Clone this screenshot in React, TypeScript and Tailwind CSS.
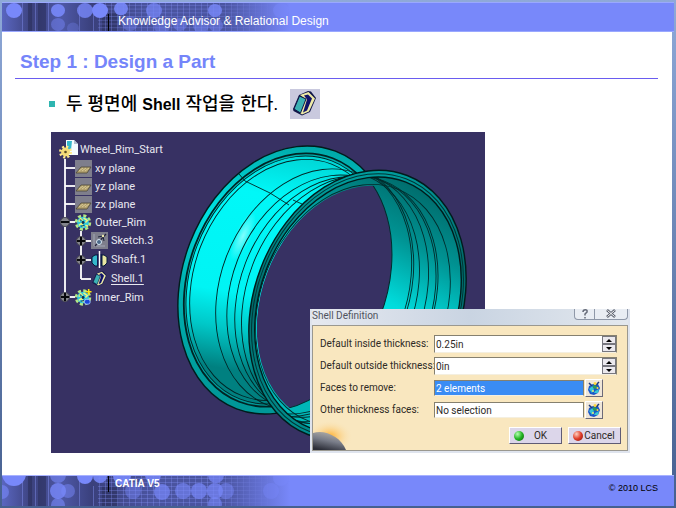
import type { ReactNode, SVGProps } from "react";

const headerDots = [
  [12, 8, 8, 1],
  [56, 8, 7, 0.9],
  [56, 23, 7, 0.45],
  [71, 27, 6, 0.3],
  [83, 8, 8, 0.8],
  [98, 8, 8, 1],
  [119, 6, 7, 0.9],
  [128, 22, 8, 0.4],
  [152, 8, 8, 0.7],
  [160, 25, 8, 0.4],
  [178, 23, 7, 0.45],
  [199, 24, 8, 0.5],
  [213, 8, 7, 0.8],
  [214, 24, 7, 0.45],
  [279, 8, 8, 0.5],
];

const footerDots = [
  [12, -2, 12, 1],
  [0, 16, 7, 0.6],
  [56, -1, 8, 0.6],
  [56, 15, 8, 0.8],
  [66, 15, 7, 0.5],
  [56, 29, 7, 0.6],
  [83, 0, 8, 1],
  [98, 0, 7, 0.9],
  [120, 0, 9, 0.9],
  [131, 15, 8, 0.45],
  [151, -1, 8, 0.8],
  [160, 16, 8, 0.7],
  [181, 15, 8, 0.6],
  [197, 15, 8, 0.7],
  [214, -1, 8, 0.7],
  [213, 15, 8, 0.7],
  [224, 15, 8, 0.5],
  [213, 28, 7, 0.6],
  [269, 15, 8, 0.4],
  [279, 2, 8, 0.5],
];

function BannerArt({ id, dots }: { id: string; dots: number[][] }) {
  return (
    <svg
      className="absolute left-0 top-0 h-full w-[300px]"
      viewBox="0 0 300 30"
      preserveAspectRatio="none"
      aria-hidden="true"
    >
      <defs>
        <linearGradient id={`${id}-fade`}>
          <stop offset="0" stopColor="#5a66c0" />
          <stop offset="0.1" stopColor="#3c427e" />
          <stop offset="0.2" stopColor="#4e58a6" />
          <stop offset="0.3" stopColor="#3a407c" />
          <stop offset="0.5" stopColor="#4a54a0" />
          <stop offset="0.74" stopColor="#4a54a0" />
          <stop offset="0.96" stopColor="#7888fa" />
        </linearGradient>
        <linearGradient id={`${id}-mask`}>
          <stop offset="0" stopColor="#fff" />
          <stop offset="0.7" stopColor="#fff" />
          <stop offset="0.92" stopColor="#000" />
        </linearGradient>
        <pattern id={`${id}-mesh`} width="6" height="4" patternUnits="userSpaceOnUse">
          <path d="M1.5 0V4M0 2.5H6" stroke="#8c9aff" strokeOpacity="0.3" />
        </pattern>
        <mask id={`${id}-m`}>
          <rect width="300" height="30" fill={`url(#${id}-mask)`} />
        </mask>
      </defs>
      <rect width="300" height="30" fill={`url(#${id}-fade)`} />
      <g mask={`url(#${id}-m)`}>
        <path d="M26 0h4v30h-4zM36 0h8v30h-8zM100 10h16v20h-16z" fill="#262a52" fillOpacity="0.5" />
        <path d="M20.5 0v30M33.5 0v30M46.500 0v30M77.5 4v26M91.5 10v20" stroke="#8c9aff" strokeOpacity="0.4" />
        <rect x="96" width="170" height="30" fill={`url(#${id}-mesh)`} />
      </g>
      {dots.map(([x, y, r, o]) => (
        <circle key={`${x}-${y}`} cx={x} cy={y} r={r} fill="#7888fa" fillOpacity={o} />
      ))}
    </svg>
  );
}

function Gear({ className = "", plus = false }: { className?: string; plus?: boolean }) {
  return (
    <svg className={className} viewBox="0 0 18 18" aria-hidden="true">
      <circle cx="8.5" cy="9" r="7" fill="none" stroke="#b4e884" strokeWidth="3.4" strokeDasharray="3.2 2.3" />
      <circle cx="8.5" cy="9" r="6.2" fill="#30c8dc" />
      <path d="M4 8l2-3 2 2M9 4l4 3-2 2M4 12l3-2 2 4M11 12l3 1" stroke="#f4f27a" strokeWidth="1.6" fill="none" />
      <path d="M6 13l4-1M5 6l2 1" stroke="#0f5470" strokeWidth="1.2" />
      <circle cx="8.5" cy="9" r="1.5" fill="#10304e" />
      {plus && (
        <>
          <rect x="10" y="11" width="6" height="5" rx="2" fill="#1c48d8" stroke="#9cc4ff" />
          <path d="M14.5 0v6M11.500 3h6" stroke="#ffe60a" strokeWidth="1.6" />
        </>
      )}
    </svg>
  );
}

function RootIcon() {
  return (
    <svg className="h-[19px] w-[19px]" viewBox="0 0 19 19" aria-hidden="true">
      <path d="M7 0h8l4 4v11H7z" fill="#f4fbff" />
      <path d="M8 1l5 0-1 9-4 3z" fill="#35b8cc" />
      <path d="M15 0v4h4" fill="#aebfd0" />
      <circle cx="6.5" cy="12" r="5" fill="none" stroke="#ffe98a" strokeWidth="3" strokeDasharray="2 1.930" />
      <circle cx="6.5" cy="12" r="4.4" fill="#f5dc78" />
      <circle cx="6.5" cy="12" r="1.3" fill="#5a4c20" />
    </svg>
  );
}

function PlaneIcon() {
  return (
    <svg className="h-[17px] w-[17px]" viewBox="0 0 17 17" aria-hidden="true">
      <rect width="17" height="17" fill="#7e7e8c" />
      <path d="M1 13l5-6h10l-4 6z" fill="#b09f6e" stroke="#4c4738" strokeWidth="0.8" />
      <path d="M4 11l4-3M7 11l4-3M10 11l4-3" stroke="#dccf98" strokeWidth="0.9" />
    </svg>
  );
}

function SketchIcon() {
  return (
    <svg className="h-[17px] w-[17px]" viewBox="0 0 17 17" aria-hidden="true">
      <rect width="17" height="17" fill="#7e7e8c" />
      <path d="M3 2v12h11" stroke="#a4a8b8" fill="none" />
      <path d="M4 14L15 2" stroke="#23233c" strokeWidth="1.2" />
      <circle cx="8" cy="10" r="2.5" fill="#4a6888" stroke="#d8e8f4" />
      <path d="M7 5l5-1 1 5" stroke="#1a2338" fill="none" />
      <circle cx="12" cy="4" r="1.2" fill="#f0ecb0" />
    </svg>
  );
}

function ShaftIcon() {
  return (
    <svg className="h-[17px] w-[17px]" viewBox="0 0 17 17" aria-hidden="true">
      <path d="M7 4H4L1 6v6l3 3h3z" fill="#35b8cc" stroke="#081c3c" />
      <path d="M6 3h5v12H6z" fill="#10184e" />
      <path d="M11 4h2l3 2v6l-3 3h-2z" fill="#e9e6a2" stroke="#081c3c" />
      <path d="M8.5 0v17" stroke="#fff" strokeWidth="1.5" />
    </svg>
  );
}

function ShellShape() {
  return (
    <>
      <path d="M3 20L9 6l9-4 3 .5L26 9l-6 14-8 3.500L3.500 22z" fill="#101648" />
      <path d="M10 6l8.500-3L25 9.500 19 22.500 12 25.500 10 24l5.500-14z" fill="#eeeaa6" />
      <path d="M4 20L9.500 7l6.500 3L10.500 24z" fill="#3cb2b4" stroke="#101648" />
      <path d="M14 6.500l4-1 4 4-5 12-4 2 4-13z" fill="#10126a" />
    </>
  );
}

function ShellIcon() {
  return (
    <svg className="h-[17px] w-[17px]" viewBox="1 0 27 28" aria-hidden="true">
      <ShellShape />
    </svg>
  );
}

type RailProps = { line?: "full" | "end"; stub?: boolean; mark?: "plus" | "minus" };

const railHeights = { full: "inset-y-0", end: "top-0 bottom-1/2" };

function Rail({ line = "full", stub = true, mark }: RailProps) {
  return (
    <span className="relative w-4 shrink-0 self-stretch" aria-hidden="true">
      <span className={`absolute left-[5px] w-0.5 bg-white/90 ${railHeights[line]}`} />
      {stub && <span className="absolute left-1.5 right-0 top-1/2 -mt-px h-0.5 bg-white/90" />}
      {mark && (
        <svg className="absolute left-px top-1/2 -mt-[5px] size-2.5" viewBox="0 0 10 10">
          <circle cx="5" cy="5" r="4.5" fill="#84848c" stroke="#4c4c54" />
          <path d={mark === "plus" ? "M1 5h8M5 1v8" : "M1 5h8"} stroke="#08080c" strokeWidth="2" />
        </svg>
      )}
    </span>
  );
}

function Node({ rail, icon, children }: { rail: RailProps; icon: ReactNode; children: ReactNode }) {
  return (
    <div className="flex h-[18px] items-center">
      <Rail {...rail} />
      {icon}
      <span className="ml-[3px]">{children}</span>
    </div>
  );
}

function SubNode({ rail, icon, children }: { rail: RailProps; icon: ReactNode; children: ReactNode }) {
  return (
    <li className="flex h-[19px] items-center">
      <Rail stub={false} />
      <Rail {...rail} />
      {icon}
      <span className="ml-[3px]">{children}</span>
    </li>
  );
}

function SpecTree() {
  return (
    <div className="absolute left-2 top-2 font-['Roboto','Noto_Sans',sans-serif] text-[11px] leading-none text-[#e8e8f0]">
      <div className="flex h-[19px] items-center gap-0.5">
        <RootIcon />
        <span>Wheel_Rim_Start</span>
      </div>
      <ul>
        <li><Node rail={{}} icon={<PlaneIcon />}>xy plane</Node></li>
        <li><Node rail={{}} icon={<PlaneIcon />}>yz plane</Node></li>
        <li><Node rail={{}} icon={<PlaneIcon />}>zx plane</Node></li>
        <li>
          <Node rail={{ mark: "minus" }} icon={<Gear className="size-[17px]" />}>Outer_Rim</Node>
          <ul>
            <SubNode rail={{ mark: "plus" }} icon={<SketchIcon />}>Sketch.3</SubNode>
            <SubNode rail={{ mark: "plus" }} icon={<ShaftIcon />}>Shaft.1</SubNode>
            <SubNode rail={{ line: "end" }} icon={<ShellIcon />}>
              <span className="underline underline-offset-2">Shell.1</span>
            </SubNode>
          </ul>
        </li>
        <li>
          <Node rail={{ line: "end", mark: "plus" }} icon={<Gear className="size-[17px]" plus />}>Inner_Rim</Node>
        </li>
      </ul>
    </div>
  );
}

// every circle of the rim projects to the same tilted ellipse, only moved and scaled
function Ring({ at, ...rest }: { at: number[] } & SVGProps<SVGEllipseElement>) {
  const [cx, cy, s] = at;
  return <ellipse rx={103 * s} ry={138 * s} transform={`translate(${cx} ${cy}) rotate(21)`} {...rest} />;
}

const back = [286, 280, 1];
const front = [357.5, 305, 1.005];
const lip = [358, 305, 0.955];
const throat = [353, 305, 0.89];

const outerLines = [
  [286, 280, 0.945],
  [286, 280, 0.925],
  [287, 280, 0.9],
  [313, 289.5, 0.9],
  [322, 293, 0.88],
  [331, 296, 0.89],
  [341, 299, 0.92],
];

const innerLines = [
  [310, 288, 0.94],
  [311, 289, 0.95],
  [320, 294, 0.92],
  [328, 297, 0.93],
  [336, 300, 0.925],
  [338, 300, 0.925],
  [353, 305, 0.9],
];

function WheelRim() {
  return (
    <svg className="block h-auto w-full" viewBox="51 132 434 321" role="img" aria-label="Wheel rim">
      <defs>
        <linearGradient id="barrel" x1="0.3" y1="0" x2="0.45" y2="1">
          <stop offset="0" stopColor="#00d0d0" />
          <stop offset="0.2" stopColor="#00f8f8" />
          <stop offset="0.6" stopColor="#00f4f4" />
          <stop offset="0.74" stopColor="#00c8c8" />
          <stop offset="0.9" stopColor="#008080" />
        </linearGradient>
        <linearGradient id="edge" x1="0.2" y1="0" x2="0.3" y2="1">
          <stop offset="0" stopColor="#00a4a4" />
          <stop offset="0.35" stopColor="#00e2e2" />
          <stop offset="0.6" stopColor="#00b4b4" />
          <stop offset="1" stopColor="#009898" />
        </linearGradient>
        <linearGradient id="inside" x1="0.6" y1="0" x2="0.5" y2="1">
          <stop offset="0" stopColor="#006c6c" />
          <stop offset="0.2" stopColor="#009292" />
          <stop offset="0.44" stopColor="#00dcdc" />
          <stop offset="0.8" stopColor="#00ffff" />
          <stop offset="0.9" stopColor="#00b8b8" />
        </linearGradient>
        <linearGradient id="lipfill" x1="0.2" y1="0" x2="0.6" y2="0.9">
          <stop offset="0" stopColor="#00a8a8" />
          <stop offset="0.5" stopColor="#006a6a" />
          <stop offset="1" stopColor="#008c8c" />
        </linearGradient>
        <radialGradient id="glint">
          <stop offset="0" stopColor="#a0ffff" stopOpacity="0.8" />
          <stop offset="1" stopColor="#a0ffff" stopOpacity="0" />
        </radialGradient>
        <clipPath id="in-back"><Ring at={back} /></clipPath>
        <clipPath id="in-front"><Ring at={lip} /></clipPath>
        <clipPath id="in-throat"><Ring at={throat} /></clipPath>
      </defs>
      <rect x="51" y="132" width="434" height="321" fill="#373163" />
      <Ring at={back} fill="url(#edge)" stroke="#001c1c" strokeWidth="1.4" />
      <Ring at={[286, 280, 0.925]} fill="url(#barrel)" />
      <ellipse cx="243" cy="236" rx="8" ry="26" transform="rotate(24 243 236)" fill="url(#glint)" />
      <g clipPath="url(#in-back)" fill="none" stroke="#002424" strokeWidth="0.9">
        {outerLines.map((l, i) => <Ring key={i} at={l} strokeWidth={i === 0 ? 1.8 : 0.9} />)}
        <path d="M239 174l6 7 25 12 19 12M293 200l9 4" />
      </g>
      <Ring at={front} fill="url(#lipfill)" stroke="#001c1c" strokeWidth="1.4" />
      <Ring at={[357.5, 305, 0.98]} fill="none" stroke="#003434" />
      <g clipPath="url(#in-front)">
        <Ring at={lip} fill="url(#inside)" />
        <g clipPath="url(#in-throat)">
          <Ring at={[286, 280, 0.98]} fill="#373163" stroke="#002c2c" />
        </g>
        <mask id="wall">
          <rect x="51" y="132" width="434" height="321" fill="#fff" />
          <g clipPath="url(#in-throat)"><Ring at={[286, 280, 0.98]} fill="#000" /></g>
        </mask>
        <g fill="none" stroke="#002c2c" strokeWidth="0.9" mask="url(#wall)">
          {innerLines.map((l, i) => <Ring key={i} at={l} />)}
        </g>
      </g>
      <Ring at={lip} fill="none" stroke="#001c1c" strokeWidth="1.4" />
    </svg>
  );
}

function Spinner({ id, value }: { id: string; value: string }) {
  return (
    <div className="flex h-[18px] flex-1 border border-[#85806f] border-b-[#f4efe0] bg-white">
      <input id={id} defaultValue={value} className="min-w-0 flex-1 bg-transparent px-px leading-none outline-none" />
      <div className="flex w-3.5 flex-col">
        {["M1 4h6L4 1z", "M1 1h6L4 4z"].map((d, i) => (
          <button
            key={d}
            type="button"
            aria-label={i ? "Decrease" : "Increase"}
            className="flex flex-1 items-center justify-center border border-[#77777f] bg-[#ebe9ee]"
          >
            <svg className="h-[5px] w-2" viewBox="0 0 8 5"><path d={d} /></svg>
          </button>
        ))}
      </div>
    </div>
  );
}

function Picker({ id, value, active = false }: { id: string; value: string; active?: boolean }) {
  return (
    <div className="mr-3.5 flex flex-1 items-center gap-px">
      <input
        id={id}
        readOnly
        value={value}
        className={`h-4 min-w-0 flex-1 border border-[#85806f] border-b-[#f4efe0] px-px leading-none outline-none ${
          active ? "bg-[#3a8cf4] text-white" : "bg-white"
        }`}
      />
      <button
        type="button"
        aria-label="Edit list"
        className="flex size-[18px] items-center justify-center border border-white border-b-[#6d6a78] border-r-[#6d6a78] bg-[#efe6d8]"
      >
        <svg className="size-3.5" viewBox="0 0 14 14" aria-hidden="true">
          <path d="M2 5l4-2h5l2 4-2 5-4 2-4-1-2-4z" fill="#1b56c8" />
          <path d="M2 8l3-3 2 3-2 4zM8 10l4-2-1 4H7z" fill="#35c4d4" />
          <path d="M6 4l4 1-1 3-3-1z" fill="#2a9a58" />
          <path d="M2 2l3 3M12 1l-3 3" stroke="#203878" strokeWidth="1.5" />
          <circle cx="8" cy="2.5" r="1.5" fill="#ffd83c" />
          <circle cx="10.5" cy="7" r="1" fill="#ffd83c" />
          <circle cx="6" cy="10" r="1" fill="#e8f07a" />
        </svg>
      </button>
    </div>
  );
}

function Row({ id, label, children }: { id: string; label: string; children: ReactNode }) {
  return (
    <div className="flex items-center">
      <label htmlFor={id} className="w-[114px] shrink-0 whitespace-nowrap">{label}</label>
      {children}
    </div>
  );
}

function ActionButton({ color, children }: { color: string; children: ReactNode }) {
  return (
    <button
      type="button"
      className="flex h-[17px] w-[53px] items-center border border-white border-b-[#5f5b74] border-r-[#5f5b74] bg-[#dcd6ea] px-1 leading-none"
    >
      <span className={`size-2.5 shrink-0 rounded-full ${color}`} />
      <span className="flex-1 text-center">{children}</span>
    </button>
  );
}

function ShellDialog() {
  return (
    <section
      aria-label="Shell Definition"
      className="absolute bottom-0 left-[259px] w-[320px] bg-[#dfe4ee] px-0.5 pb-0.5 font-['Roboto','Noto_Sans',sans-serif] text-[10px] leading-none text-[#2e2a26]"
    >
      <header className="flex h-4 justify-between bg-linear-to-r from-[#e6e9f0] via-[#c9d4e2] to-[#e3e8ee]">
        <h2 className="pt-0.5 text-[#50545e]">Shell Definition</h2>
        <div className="flex h-[11px] w-[54px] overflow-hidden rounded-b-sm border border-t-0 border-[#8f98a8] bg-[#e9edf3]">
          <button type="button" aria-label="Help" className="flex w-5 items-center justify-center border-r border-[#8f98a8]">
            <svg className="size-2.5" viewBox="0 0 10 10" aria-hidden="true">
              <path d="M3 3c0-3 5-3 4 0L5 5v1.500M5 8v1.500" fill="none" stroke="#666b78" strokeWidth="1.5" />
            </svg>
          </button>
          <button type="button" aria-label="Close" className="flex flex-1 items-center justify-center">
            <svg className="size-2.5" viewBox="0 0 10 10" aria-hidden="true">
              <path d="M1 1l8 7M9 1L1 8" stroke="#5a5f6c" strokeWidth="2.6" />
              <path d="M1.500 1.500l7 6M8.500 1.500l-7 6" stroke="#fff" />
            </svg>
          </button>
        </div>
      </header>
      <form className="relative border border-[#9a9890] bg-[#f9e7bf] pb-1.5 pl-[7px] pr-2.5 pt-[9px]">
        <svg className="absolute bottom-0 left-0 h-[30px] w-[42px]" viewBox="0 0 42 30" aria-hidden="true">
          <defs>
            <radialGradient id="glow" cx="0.4" cy="0.55" r="0.55">
              <stop offset="0" stopColor="#ffae28" />
              <stop offset="1" stopColor="#f9e7bf" stopOpacity="0" />
            </radialGradient>
            <linearGradient id="planet" x1="0.7" x2="0.3" y1="0" y2="1">
              <stop offset="0" stopColor="#b8b4ac" />
              <stop offset="0.5" stopColor="#787c88" />
              <stop offset="1" stopColor="#2c2e38" />
            </linearGradient>
          </defs>
          <rect width="42" height="30" fill="url(#glow)" />
          <path d="M0 13c12-4 28 4 33 17H0z" fill="url(#planet)" />
        </svg>
        <div className="relative flex flex-col gap-1">
          <Row id="inside-thickness" label="Default inside thickness:"><Spinner id="inside-thickness" value="0.25in" /></Row>
          <Row id="outside-thickness" label="Default outside thickness:"><Spinner id="outside-thickness" value="0in" /></Row>
          <Row id="faces" label="Faces to remove:"><Picker id="faces" value="2 elements" active /></Row>
          <Row id="other-faces" label="Other thickness faces:"><Picker id="other-faces" value="No selection" /></Row>
        </div>
        <div className="relative -mr-1 mt-2 flex justify-end gap-1.5">
          <ActionButton color="bg-radial-[at_35%_30%] from-[#b4ffb0] via-[#22b422] to-[#085808]">OK</ActionButton>
          <ActionButton color="bg-radial-[at_35%_30%] from-[#ffd0c0] via-[#e03c28] to-[#7c1008]">Cancel</ActionButton>
        </div>
      </form>
    </section>
  );
}

export default function App() {
  return (
    <div className="flex min-h-screen flex-col bg-linear-to-b from-[#8fa9d8] to-[#466090] py-0.5 pl-0.5 font-['Liberation_Sans','Noto_Sans_CJK_KR',sans-serif]">
      <header className="relative mr-0.5 flex h-[30px] border-y border-[#9aa8ff] bg-[#7888fa]">
        <BannerArt id="top" dots={headerDots} />
        <div className="relative ml-[106px] mt-[11px] flex flex-1 items-start border-l border-black pl-[9px]">
          <p className="text-[12px] leading-[14px] text-white">Knowledge Advisor &amp; Relational Design</p>
        </div>
      </header>

      <main className="mr-1 flex-1 bg-white pb-[21px]">
        <div className="ml-[13px] mr-3.5 border-b border-[#6a5cf0] pb-1 pl-[5px] pt-[18px]">
          <h1 className="text-[19px] font-bold leading-6 text-[#7585fa]">Step 1 : Design a Part</h1>
        </div>
        <div className="ml-[47px] mt-2.5 flex h-[30px] items-center">
          <span className="mr-[11px] size-1.5 bg-[#2fb5b0]" />
          <p className="text-[18px] font-medium leading-none text-black">
            두 평면에 <b className="text-[16px]">Shell</b> 작업을 한다.
          </p>
          <svg className="ml-3 size-[30px]" viewBox="0 0 30 30" aria-hidden="true">
            <rect width="30" height="30" fill="#c9c9de" />
            <ShellShape />
          </svg>
        </div>
        <div className="relative ml-[49px] mt-[13px] w-[434px]">
          <WheelRim />
          <SpecTree />
          <ShellDialog />
        </div>
      </main>

      <footer className="relative mr-0.5 flex h-[31px] items-start border-t border-[#a8b2ff] bg-[#7888fa]">
        <BannerArt id="bottom" dots={footerDots} />
        <div className="relative ml-[106px] h-4 border-l border-black pl-1.5">
          <p className="pt-0.5 text-[10px] font-bold leading-3 text-white">CATIA V5</p>
        </div>
        <p className="relative ml-auto mr-4 pt-1.5 text-[9px] leading-3 text-black">© 2010 LCS</p>
      </footer>
    </div>
  );
}
